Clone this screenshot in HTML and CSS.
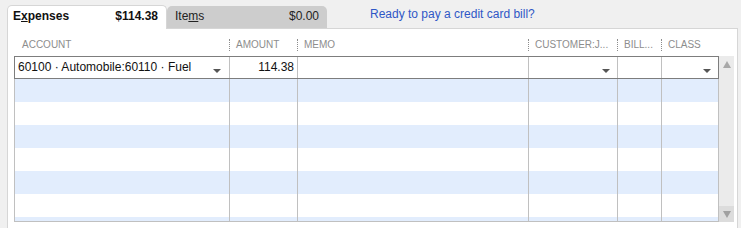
FILE: index.html
```html
<!DOCTYPE html>
<html>
<head>
<meta charset="utf-8">
<link rel="stylesheet" href="styles.css">
</head>
<body>
<div class="tabs">
  <div class="tab active"><span>E<u>x</u>penses</span><span class="amt">$114.38</span></div>
  <div class="tab"><span>Ite<u>m</u>s</span><span>$0.00</span></div>
  <a class="link">Ready to pay a credit card bill?</a>
</div>
<div class="panel">
  <div class="head">
    <div class="hc first">ACCOUNT</div>
    <div class="hc">AMOUNT</div>
    <div class="hc">MEMO</div>
    <div class="hc">CUSTOMER:J...</div>
    <div class="hc">BILL...</div>
    <div class="hc">CLASS</div>
  </div>
  <div class="table">
    <div class="grid">
      <div class="row sel">
        <div class="c acct"><span>60100 · Automobile:60110 · Fuel</span><i class="dd"></i></div>
        <div class="c num">114.38</div>
        <div class="c"></div>
        <div class="c drop"><i class="dd"></i></div>
        <div class="c"></div>
        <div class="c drop"><i class="dd"></i></div>
      </div>
      <div class="body">
        <div class="row blue"><div class="c"></div><div class="c"></div><div class="c"></div><div class="c"></div><div class="c"></div><div class="c"></div></div>
        <div class="row"><div class="c"></div><div class="c"></div><div class="c"></div><div class="c"></div><div class="c"></div><div class="c"></div></div>
        <div class="row blue"><div class="c"></div><div class="c"></div><div class="c"></div><div class="c"></div><div class="c"></div><div class="c"></div></div>
        <div class="row"><div class="c"></div><div class="c"></div><div class="c"></div><div class="c"></div><div class="c"></div><div class="c"></div></div>
        <div class="row blue"><div class="c"></div><div class="c"></div><div class="c"></div><div class="c"></div><div class="c"></div><div class="c"></div></div>
        <div class="row"><div class="c"></div><div class="c"></div><div class="c"></div><div class="c"></div><div class="c"></div><div class="c"></div></div>
        <div class="row blue"><div class="c"></div><div class="c"></div><div class="c"></div><div class="c"></div><div class="c"></div><div class="c"></div></div>
      </div>
    </div>
    <div class="scroll">
      <div class="sbtn"><i class="up"></i></div>
      <div class="track"></div>
      <div class="sbtn down-btn"><i class="down"></i></div>
    </div>
  </div>
</div>
</body>
</html>
```

FILE: styles.css
```css
* { box-sizing: border-box; }
body {
  margin: 0;
  background: #f0f0f0;
  font-family: "Liberation Sans", Arial, sans-serif;
  font-size: 12px;
  color: #111;
  overflow: hidden;
}
.tabs {
  display: flex;
  align-items: flex-start;
  padding: 5px 0 0 7px;
  height: 28px;
}
.tab {
  width: 160px;
  height: 22px;
  margin-top: 1px;
  display: flex;
  justify-content: space-between;
  padding: 0 8px 0 8px;
  line-height: 20px;
  background: #cdcdcd;
  border-radius: 5px 5px 0 0;
  color: #222;
}
.tab.active {
  height: 24px;
  margin-top: 0;
  background: #fff;
  border: 1px solid #d6d6d6;
  border-bottom: none;
  padding: 0 8px 0 5px;
  font-weight: bold;
  color: #111;
  position: relative;
  z-index: 1;
}
.tab u { text-decoration: underline; }
.link {
  margin-left: 43px;
  line-height: 18px;
  color: #2f57c6;
}
.panel {
  margin-left: 7px;
  width: 731px;
  height: 210px;
  background: #fff;
  border: 1px solid #d6d6d6;
  padding-left: 6px;
}
.head {
  display: grid;
  grid-template-columns: 215px 68px 231px 89px 44px 57px;
  height: 27px;
  padding-top: 10px;
}
.hc {
  height: 12px;
  line-height: 12px;
  font-size: 10px;
  color: #8d8d8d;
  border-left: 1px dotted #8d8d8d;
  padding-left: 6px;
  white-space: nowrap;
}
.hc.first { border-left: none; padding-left: 8px; }
.table {
  display: flex;
}
.grid {
  width: 705px;
  height: 166px;
  border-bottom: 1px solid #c0c0c0;
  display: flex;
  flex-direction: column;
}
.row {
  display: grid;
  grid-template-columns: 215px 68px 231px 89px 44px 57px;
  height: 23px;
  border-left: 1px solid #c0c0c0;
  flex: none;
}
.row.blue { background: #e2edfd; }
.c { border-right: 1px solid #c0c0c0; }
.row.sel {
  border: 1px solid #7d7d7d;
  border-right: none;
  height: 23px;
}
.row.sel .c {
  line-height: 21px;
  display: flex;
  align-items: center;
}
.row.sel .c:last-child { border-right-color: #7d7d7d; }
.acct { padding-left: 3px; justify-content: space-between; padding-right: 8px; }
.num { justify-content: flex-end; padding-right: 3px; }
.drop { justify-content: flex-end; padding-right: 7px; }
.dd {
  width: 0; height: 0;
  border-left: 4px solid transparent;
  border-right: 4px solid transparent;
  border-top: 4px solid #555;
  margin-top: 7px;
}
.body {
  height: 142px;
  overflow: hidden;
}
.scroll {
  width: 15px;
  height: 166px;
  background: #ebebeb;
  display: flex;
  flex-direction: column;
  padding-top: 1px;
}
.sbtn {
  height: 14px;
  display: flex;
  justify-content: center;
  align-items: center;
}
.down-btn { background: #dcdcdc; height: 16px; }
.track { flex: 1; }
.up, .down {
  width: 0; height: 0;
  border-left: 4px solid transparent;
  border-right: 4px solid transparent;
}
.up { border-bottom: 7px solid #a8a8a8; }
.down { border-top: 7px solid #a0a0a0; }
```
